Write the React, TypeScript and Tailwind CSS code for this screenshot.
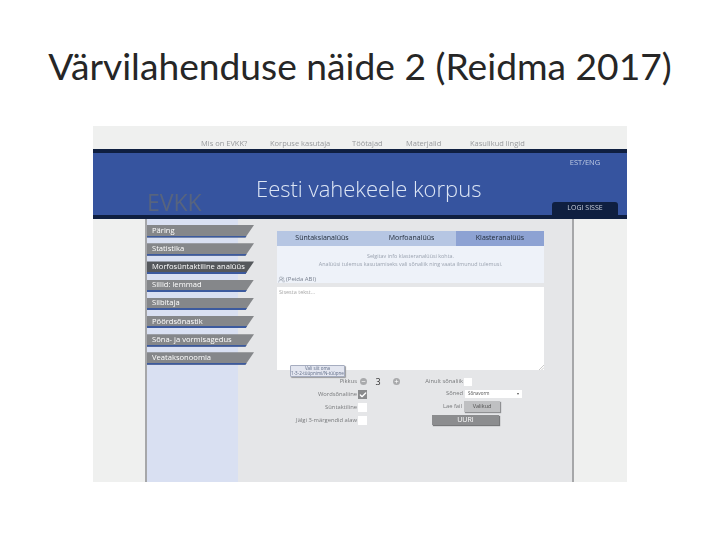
import { Check, Minus, Plus, UsersRound } from "lucide-react";

const NAV = [
  { label: "Päring" },
  { label: "Statistika" },
  { label: "Morfosüntaktiline analüüs", active: true },
  { label: "Sillid: lemmad" },
  { label: "Silbitaja" },
  { label: "Pöördsõnastik" },
  { label: "Sõna- ja vormisagedus" },
  { label: "Veataksonoomia" },
];

const TOP_LINKS = [
  { label: "Mis on EVKK?", width: "w-[69px]" },
  { label: "Korpuse kasutaja", width: "w-[82px]" },
  { label: "Töötajad", width: "w-[54px]" },
  { label: "Materjalid", width: "w-[64px]" },
  { label: "Kasulikud lingid", width: "w-[70px]" },
];

const TABS = [
  { label: "Süntaksianalüüs", width: "w-[90px]" },
  { label: "Morfoanalüüs", width: "w-[89px]" },
  { label: "Klasteranalüüs", width: "w-[88px]", active: true },
];

function NavItem({ label, active }: { label: string; active?: boolean }) {
  return (
    <div
      className={`flex h-[12.5px] w-[107px] items-center border-b-2 border-[#3c5a9e] pl-[5px] text-[7.6px] text-white [clip-path:polygon(0_0,100%_0,92%_100%,0_100%)] ${
        active ? "bg-[#55585c]" : "bg-[#85878a]"
      }`}
    >
      <span className="whitespace-nowrap">{label}</span>
    </div>
  );
}

function FormRow({ label, children }: { label: string; children: React.ReactNode }) {
  return (
    <div className="flex h-[9px] items-center justify-end gap-[1px]">
      <span className="whitespace-nowrap text-[5.8px] text-[#77797b]">{label}</span>
      <div className="flex w-[37px] items-center">{children}</div>
    </div>
  );
}

export default function App() {
  return (
    <div className="flex h-[540px] w-[720px] flex-col items-center overflow-hidden bg-white font-['Lato',sans-serif]">
      <h1 className="mt-[42px] h-[58px] whitespace-nowrap text-center text-[37.2px] leading-[48px] text-[#262626]">
        Värvilahenduse näide 2 (Reidma 2017)
      </h1>

      {/* the screenshot on the slide, a little soft like the original */}
      <div className="mt-[26px] flex h-[356px] w-[534px] flex-col bg-[#eff0ef] font-['Open_Sans',sans-serif] blur-[0.4px]">
        <div className="flex h-[23px] flex-none items-center pl-[108px] pt-[12px] text-[7.5px] text-[#97999c]">
          {TOP_LINKS.map((link) => (
            <span key={link.label} className={`whitespace-nowrap ${link.width}`}>
              {link.label}
            </span>
          ))}
        </div>

        <header className="flex h-[70px] flex-none flex-col border-y-[4.5px] border-[#0f1f40] bg-[#36549f]">
          <div className="flex h-full">
            <div className="flex w-[163px] flex-none items-end pl-[54px] text-[23px] leading-[26px] text-[#57647f]">
              EVKK
            </div>
            <div className="pt-[20px] text-[22px] font-light leading-[30px] text-[#dde6f5]">
              Eesti vahekeele korpus
            </div>
            <div className="ml-auto mr-[9px] flex w-[66px] flex-none flex-col items-center justify-between">
              <span className="pt-[4px] text-[7.5px] text-[#bfcbe4]">EST/ENG</span>
              <div className="flex h-[13px] w-[66px] items-center justify-center rounded-t-[3px] bg-[#0f1f40] text-[7px] text-[#c9d0dc]">
                LOGI SISSE
              </div>
            </div>
          </div>
        </header>

        <div className="flex min-h-0 flex-1 pl-[52px] pr-[53px]">
          <aside className="relative z-10 flex w-[93px] flex-none flex-col gap-[5.7px] border-l-2 border-[#a6a7a9] bg-[#d9e0f2] pt-[6px]">
            {NAV.map((item) => (
              <NavItem key={item.label} label={item.label} active={item.active} />
            ))}
          </aside>

          <main className="relative min-w-0 flex-1 border-r-2 border-[#a6a7a9] bg-[#e5e6e8] pl-[39px] pt-[12px]">
            <div className="flex h-[15px] w-[267px]">
              {TABS.map((tab) => (
                <div
                  key={tab.label}
                  className={`flex items-center justify-center text-[7px] text-[#1f2937] ${tab.width} ${
                    tab.active ? "bg-[#8da2d3]" : "bg-[#b6c6e3]"
                  }`}
                >
                  {tab.label}
                </div>
              ))}
            </div>
            <div className="h-[37px] w-[267px] bg-[#eef2f9] pt-[6px] text-center text-[5.4px] leading-[8px] text-[#9ba3b0]">
              <p>Selgitav info klasteranalüüsi kohta.</p>
              <p>Analüüsi tulemus kasutamiseks vali sõnaliik ning vaata ilmunud tulemusi.</p>
              <div className="mt-[7px] flex items-center gap-[1px] pl-[1px] text-[6px] text-[#7a8291]">
                <UsersRound size={7} strokeWidth={1.5} />
                <span>(Peida ABI)</span>
              </div>
            </div>
            <div className="relative mt-[4px] h-[83px] w-[267px] bg-white pl-[2px] pt-[1px] text-[5.5px] text-[#a8a8a8]">
              Sisesta tekst...
              <svg viewBox="0 0 6 6" className="absolute bottom-0 right-0 size-[6px] text-[#b5b5b5]">
                <path d="M1 6 6 1M3.5 6 6 3.5" fill="none" stroke="currentColor" strokeWidth="0.7" />
              </svg>
            </div>

            <div className="mt-[7px] flex w-[267px]">
              <div className="flex w-[118px] flex-none flex-col gap-[4px]">
                <FormRow label="Pikkus">
                  <div className="flex items-center pl-[2px] text-[9px] text-[#333333]">
                    <span className="flex size-[7px] items-center justify-center rounded-full bg-[#a9aaac] text-white">
                      <Minus size={5} strokeWidth={3} />
                    </span>
                    <span className="ml-[7px] w-[8px] text-center leading-[9px]">3</span>
                    <span className="ml-[11px] flex size-[7px] flex-none items-center justify-center rounded-full bg-[#a9aaac] text-white">
                      <Plus size={5} strokeWidth={3} />
                    </span>
                  </div>
                </FormRow>
                <FormRow label="Wordsõnaliine">
                  <span className="flex size-[9px] items-center justify-center bg-[#8a8b8d] text-white">
                    <Check size={8} strokeWidth={4} />
                  </span>
                </FormRow>
                <FormRow label="Süntaktiline">
                  <span className="size-[9px] bg-white" />
                </FormRow>
                <FormRow label="Jälgi 3-märgendid alaw">
                  <span className="size-[9px] bg-white" />
                </FormRow>
              </div>

              <div className="ml-[3px] flex w-[130px] flex-none flex-col items-start">
                <div className="flex h-[9px] w-[74px] items-center justify-end gap-[1px]">
                  <span className="whitespace-nowrap text-[5.8px] text-[#77797b]">Ainult sõnaliik</span>
                  <span className="size-[8px] bg-white" />
                </div>
                <div className="mt-[3px] flex h-[9px] items-center">
                  <span className="w-[67px] pr-[2px] text-right text-[5.8px] text-[#77797b]">Sõned</span>
                  <div className="flex h-[8px] w-[57px] items-center justify-between bg-white px-[3px] text-[4.5px] text-[#555555]">
                    <span>Sõnavorm</span>
                    <span className="text-[4px]">▾</span>
                  </div>
                </div>
                <div className="mt-[3px] flex h-[11px] items-center">
                  <span className="w-[66px] pr-[2px] text-right text-[5.8px] text-[#77797b]">Lae fail</span>
                  <div className="flex h-[11px] w-[36px] items-center justify-center bg-[#bfc0c2] text-[5.5px] text-[#4e4e4e] shadow-[1px_1px_1px_#8f9092]">
                    Valikud
                  </div>
                </div>
                <div className="ml-[34px] mt-[3px] flex h-[10px] w-[67px] items-center justify-center bg-[#8c8d8f] text-[7px] text-white shadow-[1px_1px_1px_#77787a]">
                  UURI
                </div>
              </div>
            </div>

            {/* tooltip over the form */}
            <div className="absolute left-[52px] top-[146px] flex h-[12px] w-[55px] flex-col items-center justify-center rounded-[1px] border border-[#a6adc0] bg-[#e3e6f0] text-[4.5px] leading-[5px] text-[#5d6a85] shadow-[1px_1px_1px_#9a9b9d]">
              <span>Vali siit oma</span>
              <span>1-3-2-tüüpnimi/N-tüüpne</span>
            </div>
          </main>
        </div>
      </div>
    </div>
  );
}
